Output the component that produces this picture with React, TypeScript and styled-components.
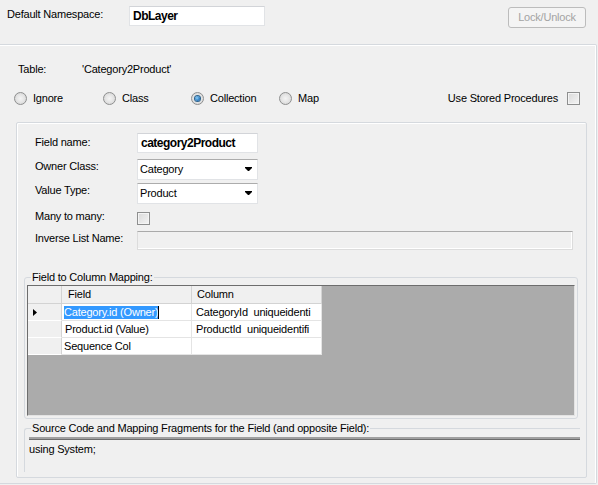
import React from "react";
import styled, { createGlobalStyle } from "styled-components";

const GlobalStyle = createGlobalStyle`
  html, body {
    margin: 0;
    padding: 0;
    background: #f0f0f0;
  }
  body {
    font-family: "Liberation Sans", Arial, sans-serif;
    font-size: 11px;
    letter-spacing: -0.2px;
    color: #000;
  }
`;

const Window = styled.div`
  width: 598px;
  height: 485px;
  overflow: hidden;
  background: #f0f0f0;
  line-height: 13px;
`;

const TopBar = styled.div`
  display: flex;
  align-items: flex-start;
  height: 44px;
  box-sizing: border-box;
  padding: 6px 12px 0 7px;
`;

const TopLabel = styled.span`
  width: 122px;
  padding-top: 2px;
`;

const TextBox = styled.div<{ $width: number; $height?: number; $bold?: boolean }>`
  width: ${(p) => p.$width}px;
  height: ${(p) => p.$height ?? 20}px;
  box-sizing: border-box;
  background: #fff;
  border: 1px solid #e1e3e6;
  border-top-color: #d2d4d8;
  display: flex;
  align-items: center;
  padding-left: 3px;
  font-weight: ${(p) => (p.$bold ? 700 : 400)};
  font-size: ${(p) => (p.$bold ? "12px" : "11px")};
  letter-spacing: ${(p) => (p.$bold ? "-0.5px" : "-0.2px")};
`;

const LockButton = styled.div`
  margin-left: auto;
  margin-top: 1px;
  width: 78px;
  height: 21px;
  box-sizing: border-box;
  border: 1px solid #bcbcbc;
  border-radius: 3px;
  background: #f4f4f4;
  color: #a3a3a3;
  display: flex;
  align-items: center;
  justify-content: center;
`;

const OuterPanel = styled.div`
  width: 597px;
  height: 440px;
  box-sizing: border-box;
  border: 1px solid #d5d9de;
  border-left: none;
  border-radius: 0 2px 2px 0;
  box-shadow: inset 0 1px 0 #fff, inset -1px 0 0 #fff;
  padding-top: 18px;
`;

const InfoRow = styled.div`
  display: flex;
  padding-left: 18px;
`;

const InfoLabel = styled.span`
  width: 64px;
`;

const RadioRow = styled.div`
  display: flex;
  align-items: center;
  height: 14px;
  margin-top: 15px;
  padding: 0 16px 0 14px;
`;

const RadioOption = styled.label<{ $w: number }>`
  display: flex;
  align-items: center;
  gap: 6px;
  width: ${(p) => p.$w}px;
`;

const RadioCircle = styled.span<{ $checked?: boolean }>`
  width: 13px;
  height: 13px;
  box-sizing: border-box;
  border-radius: 50%;
  border: 1px solid #8e8f8f;
  background: radial-gradient(circle at 50% 50%, #f4f4f4 0%, #e6e6e6 45%, #cfcfcf 100%);
  display: flex;
  align-items: center;
  justify-content: center;
  &::after {
    content: "";
    display: ${(p) => (p.$checked ? "block" : "none")};
    width: 5px;
    height: 5px;
    border-radius: 50%;
    background: radial-gradient(circle at 40% 40%, #8fd0f7 0%, #1d6fb8 70%, #0d4a86 100%);
    box-shadow: 0 0 0 1px #2c628b;
  }
`;

const CheckBox = styled.span`
  display: block;
  width: 13px;
  height: 13px;
  box-sizing: border-box;
  border: 1px solid #8e8f8f;
  background: linear-gradient(135deg, #d9d9d9 0%, #f4f4f4 100%);
  box-shadow: inset 0 0 0 1px #f4f4f4;
`;

const StoredProc = styled.label`
  margin-left: auto;
  display: flex;
  align-items: center;
  gap: 9px;
`;

const InnerPanel = styled.div`
  margin: 17px 0 0 16px;
  width: 571px;
  height: 356px;
  box-sizing: border-box;
  border: 1px solid #d5d9de;
  border-radius: 2px;
  box-shadow: inset 1px 1px 0 #fff;
  padding-top: 10px;
  overflow: hidden;
`;

const FormSection = styled.div`
  padding-left: 18px;
`;

const FieldRow = styled.div<{ $mt: number; $h: number }>`
  display: flex;
  align-items: flex-start;
  margin-top: ${(p) => p.$mt}px;
  height: ${(p) => p.$h}px;
`;

const FieldLabel = styled.span<{ $pt: number }>`
  width: 102px;
  padding-top: ${(p) => p.$pt}px;
`;

const ComboBox = styled.div`
  width: 121px;
  height: 21px;
  box-sizing: border-box;
  background: #fff;
  border: 1px solid #e1e3e6;
  border-top-color: #acacac;
  display: flex;
  align-items: center;
  justify-content: space-between;
  padding: 0 5px 0 2px;
`;

const ArrowIcon = () => (
  <svg width="7" height="5" viewBox="0 0 7 5">
    <polygon points="0,0 7,0 7,1 4,4 3,4 0,1" fill="#000" />
  </svg>
);

const ManyCheck = styled(CheckBox)`
  margin-top: 5px;
`;

const DisabledBox = styled.div`
  width: 436px;
  height: 19px;
  box-sizing: border-box;
  background: #f0f0f0;
  border: 1px solid #dcdcdc;
  border-top-color: #aaaaaa;
  box-shadow: inset -1px -1px 0 #fff;
`;

const GroupBox = styled.fieldset`
  margin: 21px 8px 0 7px;
  width: 554px;
  height: 148px;
  box-sizing: border-box;
  border: 1px solid #d5d9de;
  border-radius: 3px;
  padding: 2px 2px 2px 2px;
  min-width: 0;
`;

const GroupLegend = styled.legend<{ $ml: number }>`
  margin-left: ${(p) => p.$ml}px;
  padding: 0 1px;
  line-height: 12px;
`;

const GridFrame = styled.div`
  width: 548px;
  height: 131px;
  box-sizing: border-box;
  background: #ababab;
  border: 1px solid #e3e3e3;
  border-top-color: #6d6d6d;
  border-left-color: #6d6d6d;
`;

const GridTable = styled.div`
  display: grid;
  grid-template-columns: 34px 130px 130px;
  grid-template-rows: 18px 17px 17px 17px;
  width: 294px;
`;

const HeaderCell = styled.div<{ $pl: number }>`
  background: #f0f0f0;
  border-right: 1px solid #d3d3d3;
  border-bottom: 1px solid #d3d3d3;
  box-sizing: border-box;
  display: flex;
  align-items: center;
  padding-left: ${(p) => p.$pl}px;
`;

const RowHeader = styled.div`
  background: #f0f0f0;
  border-right: 1px solid #d3d3d3;
  border-bottom: 1px solid #fff;
  box-sizing: border-box;
  display: flex;
  align-items: center;
  padding-left: 5px;
`;

const Cell = styled.div<{ $pl: number }>`
  background: #fff;
  border-right: 1px solid #e4e4e4;
  border-bottom: 1px solid #e4e4e4;
  box-sizing: border-box;
  display: flex;
  align-items: center;
  padding-left: ${(p) => p.$pl}px;
  white-space: nowrap;
  overflow: hidden;
`;

const Selected = styled.span`
  background: #3399ff;
  color: #fff;
`;

const Caret = styled.span`
  display: inline-block;
  width: 1px;
  height: 13px;
  background: #000;
`;

const SourceGroup = styled.fieldset`
  margin: 3px 0 0 7px;
  width: 556px;
  height: 50px;
  box-sizing: border-box;
  border: 1px solid #d5d9de;
  border-right: none;
  border-bottom: none;
  border-radius: 3px 0 0 0;
  padding: 3px 0 0 4px;
  min-width: 0;
`;

const CodeArea = styled.div`
  height: 40px;
  border-top: 2px solid #a0a0a0;
  box-shadow: inset 0 1px 0 #6d6d6d;
  padding-top: 4px;
  background: #f0f0f0;
`;

const RowArrow = () => (
  <svg width="4" height="7" viewBox="0 0 4 7">
    <polygon points="0,0 4,3.5 0,7" fill="#000" />
  </svg>
);

export default function App() {
  return (
    <Window>
      <GlobalStyle />
      <TopBar>
        <TopLabel>Default Namespace:</TopLabel>
        <TextBox $width={136} $bold>
          DbLayer
        </TextBox>
        <LockButton>Lock/Unlock</LockButton>
      </TopBar>
      <OuterPanel>
        <InfoRow>
          <InfoLabel>Table:</InfoLabel>
          <span>'Category2Product'</span>
        </InfoRow>
        <RadioRow>
          <RadioOption $w={89}>
            <RadioCircle />
            Ignore
          </RadioOption>
          <RadioOption $w={88}>
            <RadioCircle />
            Class
          </RadioOption>
          <RadioOption $w={88}>
            <RadioCircle $checked />
            Collection
          </RadioOption>
          <RadioOption $w={80}>
            <RadioCircle />
            Map
          </RadioOption>
          <StoredProc>
            Use Stored Procedures
            <CheckBox />
          </StoredProc>
        </RadioRow>
        <InnerPanel>
          <FormSection>
            <FieldRow $mt={0} $h={20}>
              <FieldLabel $pt={3}>Field name:</FieldLabel>
              <TextBox $width={121} $bold>
                category2Product
              </TextBox>
            </FieldRow>
            <FieldRow $mt={6} $h={21}>
              <FieldLabel $pt={1}>Owner Class:</FieldLabel>
              <ComboBox>
                Category
                <ArrowIcon />
              </ComboBox>
            </FieldRow>
            <FieldRow $mt={3} $h={21}>
              <FieldLabel $pt={1}>Value Type:</FieldLabel>
              <ComboBox>
                Product
                <ArrowIcon />
              </ComboBox>
            </FieldRow>
            <FieldRow $mt={3} $h={20}>
              <FieldLabel $pt={3}>Many to many:</FieldLabel>
              <ManyCheck />
            </FieldRow>
            <FieldRow $mt={4} $h={19}>
              <FieldLabel $pt={1}>Inverse List Name:</FieldLabel>
              <DisabledBox />
            </FieldRow>
          </FormSection>
          <GroupBox>
            <GroupLegend $ml={4}>Field to Column Mapping:</GroupLegend>
            <GridFrame>
              <GridTable>
                <HeaderCell $pl={0} />
                <HeaderCell $pl={6}>Field</HeaderCell>
                <HeaderCell $pl={5}>Column</HeaderCell>
                <RowHeader>
                  <RowArrow />
                </RowHeader>
                <Cell $pl={2}>
                  <Selected>Category.id (Owner)</Selected>
                  <Caret />
                </Cell>
                <Cell $pl={4}>CategoryId&nbsp; uniqueidenti</Cell>
                <RowHeader />
                <Cell $pl={3}>Product.id (Value)</Cell>
                <Cell $pl={4}>ProductId&nbsp; uniqueidentifi</Cell>
                <RowHeader />
                <Cell $pl={2}>Sequence Col</Cell>
                <Cell $pl={4} />
              </GridTable>
            </GridFrame>
          </GroupBox>
          <SourceGroup>
            <GroupLegend $ml={2}>
              Source Code and Mapping Fragments for the Field (and opposite Field):
            </GroupLegend>
            <CodeArea>using System;</CodeArea>
          </SourceGroup>
        </InnerPanel>
      </OuterPanel>
    </Window>
  );
}
